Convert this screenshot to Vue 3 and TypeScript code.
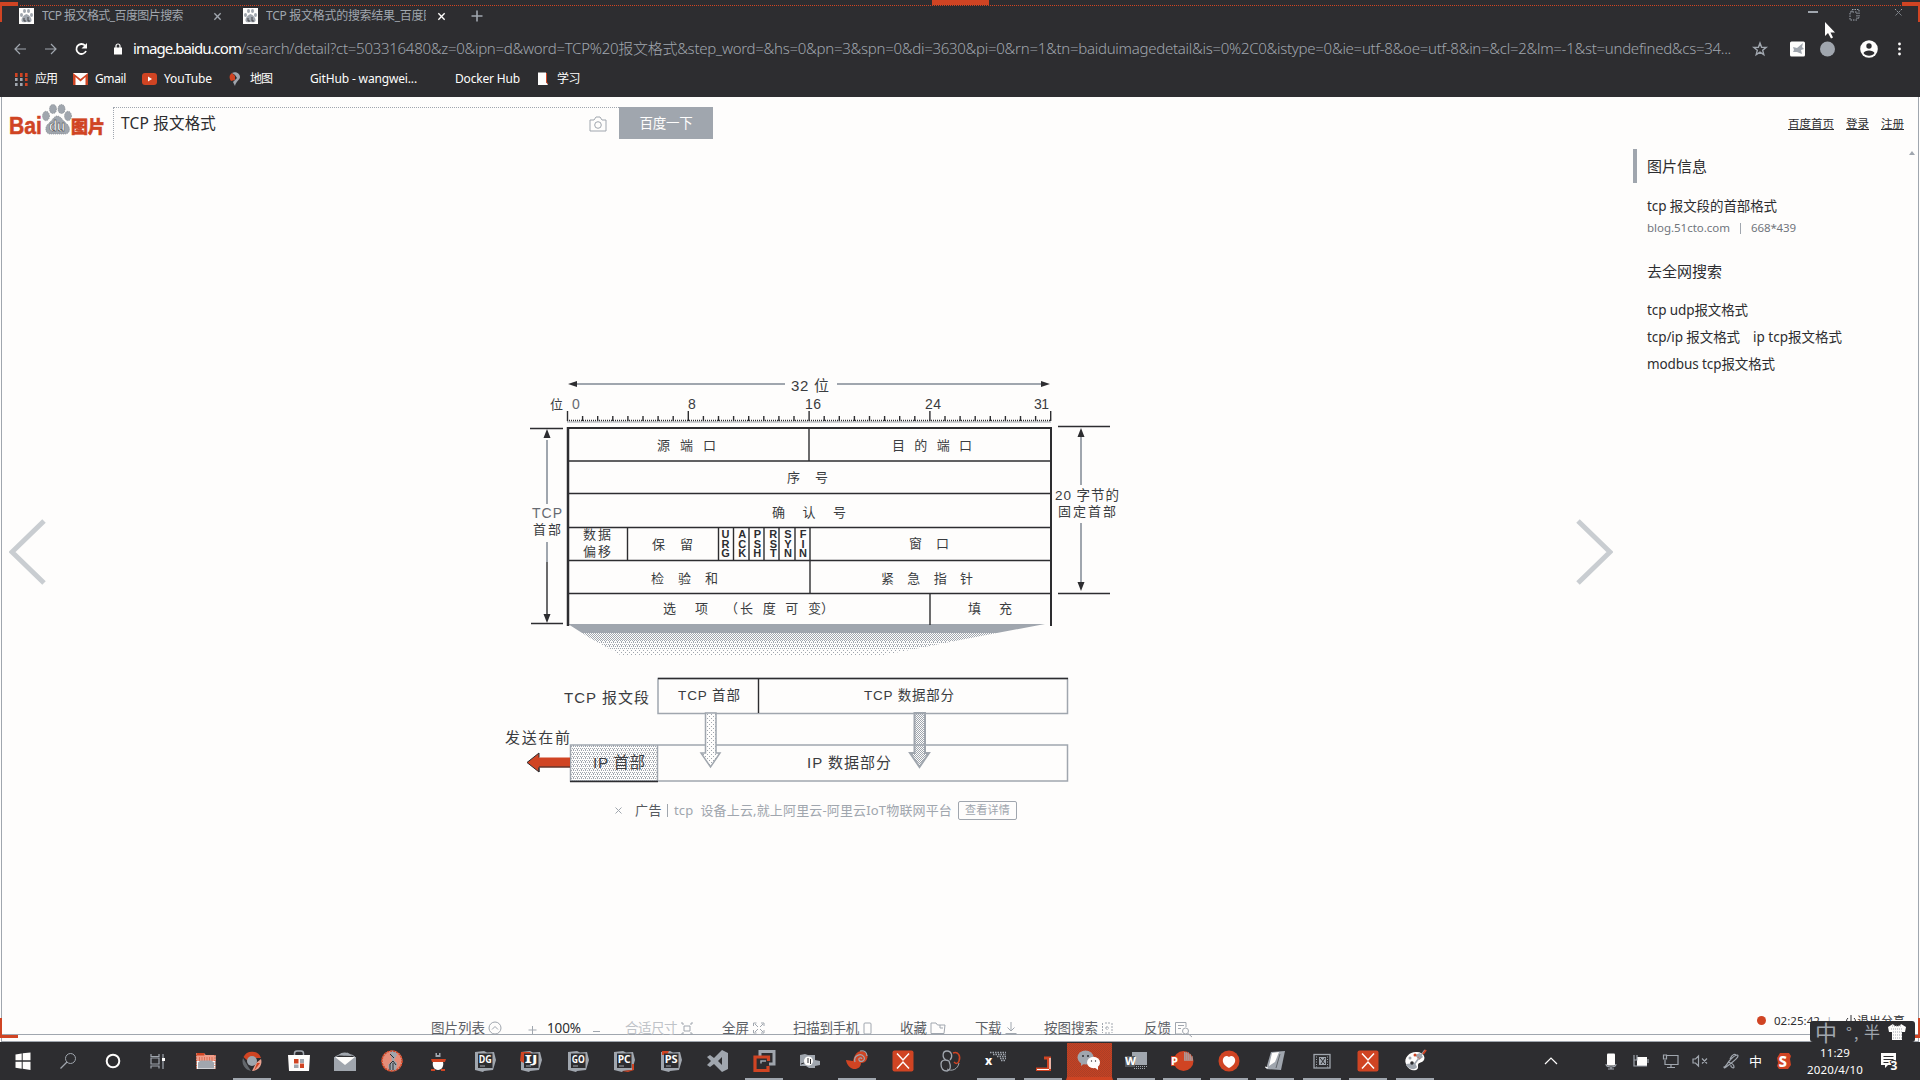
<script setup lang="ts">
interface Mark { label: string; icon: string; w: number; iconW: number; gap: number; lead: number }
interface Tool { label: string; icon: string; w: number; iconW: number; lead: number; dim?: boolean }
interface Task { icon: string; open?: boolean; active?: boolean }
interface Label { t: string; x: number; y: number; w: number; s?: number; soft?: boolean }

// Stretches or tightens the letter spacing so that a label fills its slot.
const vFit = {
  mounted(el: HTMLElement, binding: { value: number }) {
    const natural = el.getBoundingClientRect().width
    const count = Array.from(el.textContent ?? '').length
    el.style.letterSpacing = `${(binding.value - natural) / count}px`
    el.style.width = `${binding.value}px`
  },
}

const R = '#d04423'
const G = '#a0a6ae'
const W = '#fefdfc'
const D = '#2d2d30'

const rest = '/search/detail?ct=503316480&z=0&ipn=d&word=TCP%20报文格式&step_word=&hs=0&pn=3&spn=0&di=3630&pi=0&rn=1&tn=baiduimagedetail&is=0%2C0&istype=0&ie=utf-8&oe=utf-8&in=&cl=2&lm=-1&st=undefined&cs=34...'

const favicon = `<rect width="15" height="16" fill="${W}"/><g fill="${G}"><ellipse cx="2.500" cy="7" rx="1.500" ry="2"/><ellipse cx="5.500" cy="3" rx="1.500" ry="2"/><ellipse cx="9.500" cy="3" rx="1.500" ry="2"/><ellipse cx="12.500" cy="7" rx="1.500" ry="2"/><path d="M7.500 6C5 7 2 10 2.500 13c1 2 3 1 5 1s4 1 5-1c.5-3-2.500-6-5-7z"/></g><path d="M5 10v3h2M9 9v4h2" stroke="${D}" fill="none" stroke-width=".8"/>`

const apps = [2, 7, 12].map((x) => [2, 7, 12].map((y) => `<rect x="${x - 1}" y="${y}" width="2.600" height="${y === 2 ? 4 : 3}" fill="${y === 2 || x === 12 ? R : G}"/>`).join('')).join('')
const bookmarks: Mark[] = [
  { label: '应用', w: 22, iconW: 14, gap: 7, lead: 14, icon: apps },
  { label: 'Gmail', w: 31, iconW: 15, gap: 7, lead: 16, icon: `<rect y="2" width="15" height="12" fill="${W}"/><path d="M0 14V2l7.500 6L15 2v12h-2.500V6l-5 4.500-5-4.500v8z" fill="${R}"/>` },
  { label: 'YouTube', w: 48, iconW: 15, gap: 7, lead: 16, icon: `<rect y="2" width="15" height="12" rx="3" fill="${R}"/><path d="M6 5.500v5l4-2.500z" fill="${W}"/>` },
  { label: '地图', w: 22, iconW: 12, gap: 9, lead: 17, icon: `<path d="M6 9 2 10C0 7 0 4 3 2l3 3z" fill="${R}"/><path d="M3 2c3-2 8 0 8 4 0 3-4 4-5 9l-2-4 4-4-2-3z" fill="${G}"/>` },
  { label: 'GitHub - wangwei...', w: 107, iconW: 0, gap: 0, lead: 38, icon: '' },
  { label: 'Docker Hub', w: 65, iconW: 0, gap: 0, lead: 38, icon: '' },
  { label: '学习', w: 23, iconW: 12, gap: 8, lead: 17, icon: `<path d="M1 1.500h8V11l2 3H1z" fill="${W}"/><path d="M9.500 2v9l1.500 2" stroke="${R}" fill="none"/>` },
]

const sm = `fill="none" stroke="${G}"`
const tools: Tool[] = [
  { label: '图片列表', w: 54, iconW: 14, lead: 0, icon: `<circle cx="7" cy="7" r="6" ${sm}/><path d="M4 8.500 7 5.500l3 3" ${sm}/>` },
  { label: '合适尺寸', w: 52, iconW: 14, lead: 24, dim: true, icon: `<path d="M4 5h6v5H4zM1 2h2v2M13 2h-2v2M1 13h2v-2M13 13h-2v-2" ${sm}/>` },
  { label: '全屏', w: 27, iconW: 14, lead: 28, icon: `<path d="M1.500 5V2h3M12 5V2H9M1.500 9v3h3M12 9v3H9M3 3l3 3M11 3 8 6M3 11l3-3M11 11 8 8" ${sm}/>` },
  { label: '扫描到手机', w: 66, iconW: 14, lead: 27, icon: `<rect x="2" y="2" width="7" height="11" rx="1" ${sm}/>` },
  { label: '收藏', w: 27, iconW: 16, lead: 24, icon: `<path d="M1 12.500V2h5l1.500 2H15l-1 8.500zM10 4v3h3" ${sm}/>` },
  { label: '下载', w: 26, iconW: 14, lead: 29, icon: `<path d="M7 1v8M3.500 6.500 7 10l3.500-3.500M1.500 12.500h11" ${sm}/>` },
  { label: '按图搜索', w: 54, iconW: 14, lead: 26, icon: `<path d="M1.500 2v10M11 2v10M4 2h5M4 12h5M6 5v4M4 7h4" ${sm} stroke-dasharray="2 1"/>` },
  { label: '反馈', w: 27, iconW: 19, lead: 29, icon: `<path d="M12 6V1.500H1.500V13H8M4 4.500h6M4 7.500h3" ${sm}/><circle cx="11.500" cy="10" r="3" ${sm}/><path d="m14 12.500 4 3.500" ${sm}/>` },
]

const ide = (t: string, accent: string) =>
  `<path d="M2 3l9-1 3 1.500 7-.5 2 8-3 10-9 1-1 1-8-2V13z" fill="${G}"/>${accent}<rect x="5" y="4.500" width="14.500" height="14.500" fill="${D}"/><text x="12.200" y="14" text-anchor="middle" font-size="10.500" font-weight="700" fill="${W}" font-family="Noto Sans, sans-serif" textLength="13" lengthAdjust="spacingAndGlyphs">${t}</text><path d="M7 17h5" stroke="${G}"/>`
const redX = `<rect x="1.500" y="1.500" width="21" height="21" rx="2" fill="${R}"/><path d="M6 4.500 12 11l6-6.500M6 19.500 12 13l6 6.500" fill="none" stroke="${W}" stroke-width="1.500"/>`
const office = (t: string, base: string) => `${base}<text x="1" y="16" font-size="11" font-weight="800" fill="${W}" font-family="Noto Sans, sans-serif">${t}</text>`

const systemIcons: string[] = [
  `<path d="M4.500 5.500 10.700 4.500v6.700H4.500zM11.700 4.300 19.500 3.500v7.700h-7.800zM4.500 12.700h6.200v7L4.500 18.700zM11.700 12.700h7.800V21l-7.800-1.200z" fill="${W}"/>`,
  `<circle cx="14.500" cy="9.500" r="5" ${sm}/><path d="M11 13l-6.500 6.500" ${sm} stroke-width="1.300"/>`,
  `<circle cx="12" cy="12" r="6.300" fill="none" stroke="${W}" stroke-width="2"/>`,
  `<path d="M5 5v2.500h8V5M5 19.500V17h8v2.500M5 9h8v6H5zM17 5v15" ${sm} stroke-width="1.200"/><rect x="16" y="9" width="3" height="3" fill="${W}"/>`,
]
const tasks: Task[] = [
  { icon: `<path d="M2.500 4h7l2 2h10v14h-19z" fill="${W}"/><path d="M2.500 4h7l2 2h10v6H2.500z" fill="#ee9d8a"/><path d="M2.500 4h8v2.500h-8z" fill="${R}"/><path d="M2.500 6v14M21 6v14M5 9h15M5 11h15" stroke="${R}" stroke-dasharray="1 1.500"/><path d="M4 19.500v-6l2.500-2h11l2.500 2v6z" fill="${G}"/>` },
  { open: true, icon: `<path d="M3.500 8A9.500 9.500 0 0 1 21 9h-9l-4 3z" fill="${R}"/><path d="M3 9l6 10 2 3A10 10 0 0 1 3 9z" fill="#63676c"/><path d="M21 10c2 6-3 12-9 12l4-8z" fill="#e7a190"/><path d="M20 14l-6 8 3-8z" fill="${R}"/><circle cx="12" cy="12" r="5" fill="${G}"/>` },
  { icon: `<path d="M7.500 7V4.500A2.500 2.500 0 0 1 10 2h4a2.500 2.500 0 0 1 2.500 2.500V7" fill="none" stroke="${G}" stroke-width="1.500"/><path d="M1 6h22l-1 16H2z" fill="${W}"/><path d="M7 10h4.500v4.500H7zM13 14.500h4V19h-4z" fill="${R}"/><path d="M7 15.500h4.500V19H7zM13 10h4v4h-4z" fill="${G}"/>` },
  { icon: `<path d="M6 6c1-3 10-4 13 1" fill="${G}"/><path d="M1 8h22v14H1z" fill="${G}"/><path d="M2 8h20l-10 8z" fill="${W}"/><path d="M8 4.500l3 1.500 4-2M2 8l4-2h13l3 2" fill="none" stroke="${G}"/>` },
  { icon: `<circle cx="12" cy="12" r="10.500" fill="#e58d79"/><path d="M10 2c4-1 7 1 7 4l-3 5 3 3-1 8-7-1-1-5 4-4z" fill="${G}"/><path d="M10 21v-6l3-3 3 4M13 14v7M10 5l4 4" fill="none" stroke="${D}"/><circle cx="12" cy="12" r="10" fill="none" stroke="${R}" stroke-width="1.500" stroke-dasharray="2 1"/>` },
  { icon: `<path d="M9.500 4h1.500v2h2V4h1.500v4h-5z" fill="${G}"/><path d="M5 10h15l-1 3H6zM5 20h4v2H5zM15 20h4v2h-4z" fill="${R}"/><path d="M7 13h10c1 4-1 8-5 8s-6-4-5-8z" fill="${W}"/>` },
  { icon: ide('DG', '') },
  { icon: ide('IJ', `<path d="M2 3h9l3 4-9 7-4-2z" fill="${R}"/>`) },
  { icon: ide('GO', '') },
  { icon: ide('PC', `<path d="M10 22l10-1v-6h2v6l-6 2z" fill="${R}"/>`) },
  { icon: ide('PS', `<path d="M3 2h7l-2 4H3z" fill="${R}"/>`) },
  { icon: `<path d="M17 1l6 3v16l-6 3-8-8-4 3-3-2 4-4-4-4 3-2 4 3zM17 8l-4 4 4 4z" fill="${G}" fill-rule="evenodd"/>` },
  { open: true, icon: `<path d="M8 7V2.500h14V15h-5" fill="none" stroke="${G}" stroke-width="3"/><path d="M16.500 12V8H3v13.500h13V17" fill="none" stroke="${R}" stroke-width="3.200"/><path d="M9 14.500V12h5" fill="none" stroke="${G}" stroke-width="1.500"/>` },
  { icon: `<path d="M2 6l5-1 3 1h7v5l5 1v4l-5 1v2h-6l-3-2H2z" fill="${G}"/><circle cx="10.500" cy="12" r="4.500" fill="${W}"/><path d="M10 9v5M12.500 10v5M3 15l3-1" stroke="${D}"/>` },
  { open: true, icon: `<path d="M1 11l7 1c1-3 2-9 8-10 5 0 8 4 6 8-1 3-4 4-6 4 0 8-13 9-15-3z" fill="${R}"/><path d="M10 13c-2-6 6-10 9-5 2 4-4 6-5 3-1-2 2-3 3-1M15 2c4-1 7 1 7 5" fill="none" stroke="${G}" stroke-width="1.200"/>` },
  { icon: redX },
  { icon: `<path d="M8 11C4 9 4 2 9 2s6 6 3 9M3 15c0-4 4-5 8-3 2 5 2 9-2 10-4 0-6-3-6-7z" fill="none" stroke="${G}" stroke-width="1.300"/><path d="M15 4c5-2 8 3 6 8-1 3-3 3-5 1" fill="none" stroke="${R}" stroke-width="1.500"/><path d="M9 20c5 3 11 0 12-6" fill="none" stroke="${G}"/>` },
  { open: true, icon: `<path d="M6 3.500h16M9 5.500h13M13 7.500h9M16 9.500h6M17 11.500h5" stroke="${G}" stroke-width="1.300" stroke-dasharray="1.500 1"/><text x="1" y="16" font-size="12" font-weight="800" fill="${W}" font-family="Noto Sans, sans-serif">x</text>` },
  { open: true, icon: `<path d="M13 7.500h7V22H5v-3.500h11V10.500h-3z" fill="${R}"/><path d="M6 20.500h12M19 9v11" stroke="${W}" stroke-width="1.200"/>` },
  { active: true, icon: `<ellipse cx="8.500" cy="9.500" rx="8" ry="7" fill="${G}"/><path d="M4 14v4l4-3z" fill="${G}"/><ellipse cx="16.500" cy="14.500" rx="6.500" ry="5.700" fill="${W}"/><path d="M17 19l4 3v-4z" fill="${W}"/><circle cx="6" cy="8" r="1" fill="${D}"/><circle cx="11" cy="8" r="1" fill="${D}"/><circle cx="14.500" cy="13" r=".7" fill="${D}"/><circle cx="18.500" cy="13" r=".7" fill="${D}"/>` },
  { open: true, icon: office('W', `<rect x="8" y="3" width="15" height="13" fill="${G}"/><path d="M12 17.500h11M10 19.500h12" stroke="${G}" stroke-dasharray="1 1"/><rect x="1" y="7" width="10" height="11" fill="#55595e"/>`) },
  { open: true, icon: office('P', `<circle cx="13.500" cy="12" r="10" fill="${R}"/><path d="M14 3a9 9 0 0 1 9 9h-9z" fill="#b98378"/><path d="M14 4h6M14 6h8M14 8h9M14 10h9" stroke="${G}" stroke-dasharray="1 1"/><rect x="1" y="7" width="9" height="10" fill="${R}"/>`) },
  { open: true, icon: `<circle cx="12" cy="12" r="10.500" fill="${R}"/><path d="M12 19c-4-2-7-5-6-9 1-3 4-4 6-2 2-2 5-1 6 2 1 4-2 7-6 9z" fill="${W}"/>` },
  { open: true, icon: `<path d="M8 3l14-1-4 19-15-1z" fill="${G}"/><path d="M9 4l7-1-4 10-6 4z" fill="${W}"/><path d="M17 5l-4 14" stroke="#63676c"/><path d="M2 18l3 1" stroke="${W}"/>` },
  { open: true, icon: `<rect x="4" y="5.500" width="16" height="13.500" ${sm} stroke-width="1.300"/><path d="M6.500 5v14M17.500 5v14" ${sm} stroke-dasharray="1 1.500"/><rect x="9" y="8" width="7" height="8" fill="${G}"/><path d="M10 9l5 6M15 9l-4 6" stroke="${D}"/>` },
  { open: true, icon: redX },
  { open: true, icon: `<path d="M3 15C0 8 8 2 14 3c7 0 10 7 5 10-3 1-4 1-4 4 1 7-10 5-12-2z" fill="${W}"/><path d="M12 6l5-2 3 4-4 3M3 15c1 5 9 7 11 3l-2-4z" fill="${G}"/><circle cx="7" cy="9" r="1.500" fill="${G}"/><circle cx="12" cy="6" r="1.500" fill="${R}"/><circle cx="16" cy="9" r="1.300" fill="${R}"/><circle cx="9" cy="14" r="1.800" fill="${D}"/><path d="M22 1L10 17" stroke="${G}" stroke-width="1.500"/><path d="M23 1l-3 4" stroke="${R}" stroke-width="2"/>` },
]

const st = `fill="none" stroke="${G}" stroke-width="1.200"`
const trayIcons = [
  { lead: 0, icon: `<path d="M6 15l6-6 6 6" fill="none" stroke="${W}" stroke-width="1.200"/>` },
  { lead: 36, icon: `<rect x="8" y="4.500" width="8" height="12" rx="1" fill="${W}"/><path d="M7 15c0 4 10 4 10 0M12 18v2M9 20h6" ${st}/>` },
  { lead: 6, icon: `<rect x="8" y="8" width="10" height="9" fill="${W}"/><path d="M5 6v5h3V6M5 11v6h13M19 10v4" ${st}/>` },
  { lead: 6, icon: `<path d="M8 6.500h11v9H6V11M4.500 6h3v4h-3zM12 16v2.500M8 18.500h8" ${st}/>` },
  { lead: 5, icon: `<path d="M5 10v4h2.500l3 3V7l-3 3zM14 9.500l5 5M19 9.500l-5 5" ${st}/>` },
  { lead: 7, icon: `<path d="M5 18c2 0 3-4 7-8s7-5 7-3-4 5-8 8-6 5-6 3zM11 10c2-5 6-6 6-3M9 13c4 1 6 2 6 5 0 2-4 0-3-2" ${st}/>` },
]

const sideLinks = [
  [{ t: 'tcp udp报文格式', w: 101 }],
  [{ t: 'tcp/ip 报文格式', w: 93 }, { t: 'ip tcp报文格式', w: 89 }],
  [{ t: 'modbus tcp报文格式', w: 128 }],
]

// Figure geometry: ruler ticks, row separators and cell dividers.
const ticks = Array.from({ length: 33 }, (_, i) => ({ x: 567.5 + i * 15.1, tall: i % 8 === 0 }))
const rowLines = [461, 493.5, 527.5, 560.5, 593.5]
const cuts: [number, number, number][] = [
  [809, 428, 461], [627.5, 528, 560], [718.5, 528, 560], [733.5, 528, 560], [749, 528, 560],
  [764, 528, 560], [779, 528, 560], [795, 528, 560], [810, 528, 593], [930, 593, 625],
]
const flags = [
  { x: 725.5, t: 'URG' }, { x: 742.3, t: 'ACK' }, { x: 757.3, t: 'PSH' },
  { x: 773.3, t: 'RST' }, { x: 788, t: 'SYN' }, { x: 803, t: 'FIN' },
]
const labels: Label[] = [
  { t: '32 位', x: 791, y: 385.5, w: 38, s: 15 },
  { t: '位', x: 550, y: 404, w: 13, s: 13 }, { t: '0', x: 572, y: 404, w: 8, s: 14, soft: true },
  { t: '8', x: 688, y: 404, w: 8, s: 14 }, { t: '16', x: 805, y: 404, w: 16, s: 14 },
  { t: '24', x: 925, y: 404, w: 16, s: 14 }, { t: '31', x: 1034, y: 404, w: 15, s: 14 },
  { t: '源端口', x: 657, y: 445, w: 59 }, { t: '目的端口', x: 892, y: 445, w: 80 },
  { t: '序号', x: 787, y: 477.5, w: 41 }, { t: '确认号', x: 772, y: 512, w: 74 },
  { t: '数据', x: 583, y: 534, w: 28 }, { t: '偏移', x: 583, y: 551, w: 28 },
  { t: '保留', x: 652, y: 544, w: 41 }, { t: '窗口', x: 909, y: 543.5, w: 40 },
  { t: '检验和', x: 651, y: 578, w: 67 }, { t: '紧急指针', x: 881, y: 578, w: 92 },
  { t: '选项', x: 663, y: 608, w: 45 }, { t: '（', x: 725, y: 608, w: 13 },
  { t: '长度可变', x: 740, y: 608, w: 81 }, { t: '）', x: 821, y: 608, w: 13 },
  { t: '填充', x: 968, y: 608, w: 44 },
  { t: 'TCP', x: 532, y: 513, w: 30, s: 14, soft: true }, { t: '首部', x: 533, y: 529.5, w: 28 },
  { t: '20 字节的', x: 1055, y: 495.5, w: 64, s: 13.5 }, { t: '固定首部', x: 1058, y: 511, w: 58 },
  { t: 'TCP 报文段', x: 564, y: 697, w: 85, s: 15 }, { t: 'TCP 首部', x: 678, y: 695, w: 62, s: 13.5 },
  { t: 'TCP 数据部分', x: 864, y: 695, w: 90, s: 13.5 }, { t: '发送在前', x: 505, y: 737, w: 65, s: 15 },
  { t: 'IP 首部', x: 593, y: 762, w: 52, s: 15.5 }, { t: 'IP 数据部分', x: 807, y: 762, w: 84, s: 15 },
]
</script>

<template>
  <div class="screen">
    <header class="chrome">
      <div class="tabs">
        <svg class="fav" viewBox="0 0 15 16" v-html="favicon" />
        <span class="tab-title t1"><span v-fit="141" class="fit">TCP 报文格式_百度图片搜索</span></span>
        <svg class="x x1" viewBox="0 0 10 10"><path d="M1.500 1.500l7 7M8.500 1.500l-7 7" /></svg>
        <svg class="fav f2" viewBox="0 0 15 16" v-html="favicon" />
        <span class="tab-title t2"><span v-fit="169" class="fit">TCP 报文格式的搜索结果_百度图</span></span>
        <svg class="x x2" viewBox="0 0 10 10"><path d="M1.500 1.500l7 7M8.500 1.500l-7 7" /></svg>
        <svg class="plus" viewBox="0 0 12 12"><path d="M6 .5v11M.5 6h11" /></svg>
        <svg class="winbtns" viewBox="0 0 100 16"><path d="M3 5h10" stroke-width="2" /><path d="M45 5h7v8h-7zM47 5V2.500h7V11h-2" stroke-dasharray="1.500 1" /><path d="M90 2l7 7M97 2l-7 7" stroke-dasharray="1.500 1" /></svg>
      </div>
      <div class="nav">
        <svg class="nav-ic" viewBox="0 0 80 16"><g fill="none" stroke="#a0a6ae" stroke-width="1.200"><path d="M12 8H1M6 3L1 8l5 5M31 8h11M37 3l5 5-5 5" /></g><path d="M71 4.500A5 5 0 1 0 72 10" fill="none" stroke="#fefdfc" stroke-width="1.800" /><path d="M73 2v5.500h-5.500z" fill="#fefdfc" /></svg>
        <svg class="lock" viewBox="0 0 8 12"><rect y="4.500" width="8" height="7" fill="#fefdfc" /><path d="M2 5V3a2 2 0 0 1 4 0v2" fill="none" stroke="#fefdfc" stroke-width="1.200" /></svg>
        <span v-fit="108" class="fit host">image.baidu.com</span>
        <span v-fit="1490" class="fit query">{{ rest }}</span>
        <svg class="nav-right" viewBox="0 0 160 20">
          <path d="M10 4l1.600 4.200 4.600.2-3.500 2.900 1.100 4.400-3.800-2.500-3.800 2.500 1.100-4.400-3.500-2.900 4.600-.2z" fill="none" stroke="#a0a6ae" stroke-width="1.400" />
          <rect x="40" y="2.500" width="15" height="15" rx="1.500" fill="#fefdfc" /><path d="M43 8l4 1 6-5-1 4 2 2-3 1 1 4-5-2-4 0 1-2z" fill="#a0a6ae" />
          <circle cx="77.500" cy="10" r="7.500" fill="#a0a6ae" /><circle cx="119" cy="10" r="8.800" fill="#fefdfc" /><circle cx="119" cy="7" r="2.700" fill="#2d2d30" /><path d="M113.500 14c1-3.500 10-3.500 11 0-2 3.500-9 3.500-11 0z" fill="#2d2d30" />
          <g fill="#fefdfc"><circle cx="149.500" cy="5" r="1.400" /><circle cx="149.500" cy="10" r="1.400" /><circle cx="149.500" cy="15" r="1.400" /></g>
        </svg>
      </div>
      <div class="marks">
        <div v-for="b in bookmarks" :key="b.label" class="mark" :style="{ marginLeft: b.lead + 'px' }">
          <svg v-if="b.iconW" :width="b.iconW" height="16" :style="{ marginRight: b.gap + 'px' }" v-html="b.icon" />
          <span v-fit="b.w" class="fit">{{ b.label }}</span>
        </div>
      </div>
      <i class="dots" /><i class="knob" />
      <svg class="cursor" viewBox="0 0 10 17"><path d="M0 0v14l3-3 3 5.500 2-1-2.500-5H10z" fill="#fefdfc" /></svg>
    </header>

    <main class="page">
      <div class="search">
        <svg class="logo" viewBox="0 0 97 32">
          <g fill="#a0a6ae" stroke="#85898f" stroke-width=".8" stroke-dasharray="1 1"><ellipse cx="37" cy="12" rx="3.500" ry="4.700" /><ellipse cx="44" cy="5" rx="3.500" ry="4.500" /><ellipse cx="52.500" cy="5" rx="3.500" ry="4.500" /><ellipse cx="59" cy="12" rx="3.500" ry="4.700" /><path d="M48 12c-3 0-5 5-9 8-4 4-2 10 2 10h15c5 0 6-6 2-10-4-3-6-8-10-8z" /></g>
          <text x="0" y="30" class="red" font-size="23" textLength="33" lengthAdjust="spacingAndGlyphs">Bai</text>
          <text x="40" y="27" fill="#fefdfc" stroke="#2d2d30" stroke-width=".5" font-size="15" font-weight="700" textLength="16" lengthAdjust="spacingAndGlyphs">du</text>
          <text x="62" y="29" class="red cj" font-size="17.500" textLength="34" lengthAdjust="spacingAndGlyphs">图片</text>
        </svg>
        <div class="box">
          <span v-fit="95" class="fit">TCP 报文格式</span>
          <svg class="cam" viewBox="0 0 18 16"><path d="M1 4h4l2-3h4l2 3h4v11H1z" fill="none" stroke="#a0a6ae" /><circle cx="9" cy="9" r="3.300" fill="none" stroke="#a0a6ae" /></svg>
        </div>
        <button><span v-fit="53" class="fit">百度一下</span></button>
        <nav class="user">
          <a><span v-fit="46" class="fit">百度首页</span></a><a><span v-fit="23" class="fit">登录</span></a><a><span v-fit="23" class="fit">注册</span></a>
        </nav>
      </div>

      <div class="body">
        <div class="stage">
          <svg class="arrow prev" viewBox="0 0 38 68"><path d="M35 3L3 34l32 31" /></svg>
          <div class="figure">
            <svg class="drawing" viewBox="500 370 640 420">
              <defs>
                <pattern id="mesh" width="2" height="2" patternUnits="userSpaceOnUse"><rect width="1" height="1" fill="#a0a6ae" /><rect x="1" y="1" width="1" height="1" fill="#a0a6ae" /></pattern>
                <pattern id="light" width="4" height="4" patternUnits="userSpaceOnUse"><rect width="1" height="1" fill="#a0a6ae" /><rect x="2" width="1" height="1" fill="#a0a6ae" /><rect x="1" y="2" width="1" height="1" fill="#a0a6ae" /><rect x="3" y="2" width="1" height="1" fill="#a0a6ae" /><rect x="1" y="1" width="1" height="1" fill="#a0a6ae" /></pattern>
                <pattern id="sparse" width="4" height="4" patternUnits="userSpaceOnUse"><rect x="1" width="1" height="1" fill="#a0a6ae" /><rect x="3" y="2" width="1" height="1" fill="#a0a6ae" /></pattern>
                <clipPath id="cone"><path d="M568 624H1045L960 640 905 651 878 656H622L590 638z" /></clipPath>
              </defs>
              <g clip-path="url(#cone)"><rect x="560" y="624" width="500" height="9" fill="#a0a6ae" /><rect x="560" y="633" width="500" height="8" fill="url(#mesh)" /><rect x="560" y="641" width="500" height="8" fill="url(#light)" /><rect x="560" y="649" width="500" height="7" fill="url(#sparse)" /></g>
              <g class="soft"><path d="M575 384H785M837 384H1043" /><path d="M567 422H1051" stroke-width="1" /><path d="M547 440V504M547 542V562M1081 435V485M1081 523V583" /></g>
              <g fill="#2d2d30"><path d="M568 384l9-3v6zM1050 384l-9-3v6zM547 429l3.500 9h-7zM547 623l3.500-9h-7zM1081 428l3.500 9h-7zM1081 591l3.500-9h-7z" /></g>
              <g class="ink">
                <path d="M567 420.500H1051" stroke-dasharray="1 1" />
                <path v-for="k in ticks" :key="k.x" :d="`M${k.x} ${k.tall ? 411 : 416}V421`" />
                <path d="M530 428.500H563M531 623.500H563M547 562V615M1058 426.500H1110M1058 593.500H1110" />
                <path v-for="y in rowLines" :key="y" :d="`M568 ${y}H1051`" />
                <path v-for="(c, i) in cuts" :key="i" :d="`M${c[0]} ${c[1]}V${c[2]}`" />
                <path d="M567 428H1052" stroke-width="2" /><path d="M568 427V626" stroke-width="2.500" /><path d="M1051 427V626" stroke-width="2" />
              </g>
              <rect x="570" y="745" width="88" height="36" fill="url(#light)" />
              <g class="soft thin"><rect x="658" y="678.500" width="409.500" height="35" fill="none" /><rect x="570.500" y="745" width="497" height="36" fill="none" /><path d="M657.500 745V781" /></g>
              <path d="M658 678.500H1068M758.500 678V713M570 781.500H658" class="ink" />
              <path d="M705.500 713V753h-4.500l9.500 14 9.500-14h-4V713z" fill="#fefdfc" /><path d="M705.500 713V753h-4.500l9.500 14 9.500-14h-4V713z" fill="url(#sparse)" class="soft thin" />
              <path d="M914.500 713V753h-4.500l9.500 14 9.500-14h-4V713z" fill="url(#mesh)" class="soft" />
              <path d="M527 762.500l12-9.500v4.500h31v10h-31v4.500z" fill="#d04423" /><path d="M527 762.500l12-9.500v4.500M539 767.500v4.500zM539 767h31M527 762.500l12 9.500" fill="none" stroke="#2d2d30" />
              <text v-for="(l, i) in labels" :key="i" :x="l.x" :y="l.y + (l.s ?? 13) * 0.37" :font-size="l.s ?? 13" :textLength="l.w" :class="{ pale: l.soft }">{{ l.t }}</text>
              <g v-for="f in flags" :key="f.t" class="flag"><text v-for="(ch, i) in f.t.split('')" :key="i" :x="f.x" :y="538 + i * 9.700">{{ ch }}</text></g>
            </svg>
            <div class="ad">
              <svg class="adx" viewBox="0 0 7 7"><path d="M.5.5l6 6M6.500.5l-6 6" /></svg>
              <span v-fit="27" class="fit dark">广告</span><i />
              <span v-fit="278" class="fit">tcp&nbsp; 设备上云,就上阿里云-阿里云IoT物联网平台</span>
              <a><span v-fit="45" class="fit">查看详情</span></a>
            </div>
          </div>
          <svg class="arrow" viewBox="0 0 38 68"><path d="M3 3l32 31L3 65" /></svg>
        </div>
        <aside class="side">
          <h2 class="first"><span v-fit="60" class="fit">图片信息</span></h2>
          <p class="name"><span v-fit="130" class="fit">tcp 报文段的首部格式</span></p>
          <p class="src"><span v-fit="83" class="fit">blog.51cto.com</span><i /><span v-fit="45" class="fit">668*439</span></p>
          <h2 class="second"><span v-fit="75" class="fit">去全网搜索</span></h2>
          <p v-for="(row, i) in sideLinks" :key="i" class="links"><a v-for="l in row" :key="l.t"><span v-fit="l.w" class="fit">{{ l.t }}</span></a></p>
          <b class="tri" />
        </aside>
      </div>

      <div class="tools">
        <template v-for="(t, i) in tools" :key="t.label">
          <div class="tool" :class="{ dim: t.dim }" :style="{ marginLeft: t.lead + 'px' }"><span v-fit="t.w" class="fit">{{ t.label }}</span><svg :width="t.iconW" height="17" v-html="t.icon" /></div>
          <div v-if="i === 0" class="zoomer"><svg width="9" height="10"><path d="M4.500 1v8M.5 5h8" /></svg><span v-fit="34" class="fit">100%</span><svg width="9" height="10"><path d="M1 6.500h7" /></svg></div>
        </template>
        <div class="share"><i /><span v-fit="46" class="fit">02:25:42</span><em>|</em><svg width="12" height="14"><path d="M3 4a4.500 4.500 0 1 0 6 0M6 1v6" fill="none" stroke="#2d2d30" /></svg><span v-fit="48" class="fit">退出分享</span></div>
      </div>
      <div class="ime"><span class="zh">中</span><span class="punct">°,</span><span class="half">半</span><svg viewBox="0 0 20 18"><path d="M1 4l5-3c1 3 7 3 8 0l5 3-1 5h-3v8H5V9H2z" fill="#fefdfc" /><path d="M5 3h10M4 6h12M6 9h9M6 12h9M6 15h9" stroke="#a0a6ae" stroke-dasharray="1 1" /></svg></div>
    </main>

    <footer class="taskbar">
      <div class="system"><svg v-for="(s, i) in systemIcons" :key="i" width="24" height="24" v-html="s" /></div>
      <div class="apps"><div v-for="(t, i) in tasks" :key="i" class="task" :class="{ open: t.open, active: t.active }"><svg width="24" height="24" v-html="t.icon" /></div></div>
      <div class="tray">
        <svg v-for="(t, i) in trayIcons" :key="i" width="24" height="24" :style="{ marginLeft: t.lead + 'px' }" v-html="t.icon" />
        <span class="zhong">中</span>
        <svg class="sogou" width="16" height="20" viewBox="0 0 16 20"><path d="M4 2h9l2 3-1 3 1 6-3 4H3l-2-3 1-3-1-5z" fill="#d04423" /><text x="2.500" y="15.500" font-size="15" font-weight="800" fill="#fefdfc">S</text></svg>
        <div class="clock"><span v-fit="30" class="fit">11:29</span><span v-fit="56" class="fit">2020/4/10</span></div>
        <svg width="20" height="20" viewBox="0 0 20 20"><path d="M1 2h15v12H8l-3 3v-3H1z" fill="#fefdfc" /><path d="M3.500 5.500h10M3.500 8.500h10M3.500 11.500h5" stroke="#2d2d30" /><text x="10.500" y="18.500" font-size="12" font-weight="700" fill="#fefdfc" stroke="#2d2d30" stroke-width="2" paint-order="stroke">3</text></svg>
      </div>
    </footer>
    <i class="corner tl" /><i class="corner tr" /><i class="corner bl" /><i class="corner br" />
  </div>
</template>

<style>
body { background: #fefdfc; overflow: hidden; }
</style>

<style scoped>
* { box-sizing: border-box; margin: 0; }
.screen { position: relative; width: 1920px; height: 1080px; display: flex; flex-direction: column; overflow: hidden; background: #fefdfc; color: #2d2d30; font: 13px/1 "Noto Sans", "Noto Sans CJK SC", sans-serif; }
svg { display: block; flex: none; }
i { font-style: normal; }
.fit { display: inline-block; white-space: pre; flex: none; }

.chrome { position: relative; flex: none; height: 97px; background: #2d2d30; color: #fefdfc; }
.tabs { height: 32px; display: flex; align-items: center; padding-left: 19px; }
.fav { width: 15px; height: 16px; }
.tab-title { margin-left: 8px; font-size: 12px; line-height: 20px; color: #a0a6ae; overflow: hidden; flex: none; }
.t1 { width: 142px; }
.t2 { width: 160px; }
.x { width: 9px; height: 9px; fill: none; stroke: #a0a6ae; stroke-width: 1.5; }
.x1 { margin-left: 29px; }
.x2 { margin-left: 11px; stroke: #fefdfc; }
.f2 { margin-left: 21px; }
.plus { width: 12px; height: 12px; margin-left: 25px; fill: none; stroke: #a0a6ae; stroke-width: 1.6; }
.winbtns { width: 100px; height: 16px; margin-left: auto; margin-right: 15px; margin-top: -3px; fill: none; stroke: #a0a6ae; }
.nav { height: 33px; display: flex; align-items: center; padding-left: 14px; font-size: 15px; }
.nav-ic { width: 80px; height: 16px; }
.lock { width: 8px; height: 12px; margin: 0 16px 0 20px; }
.nav .fit { line-height: 24px; margin-top: -2px; }
.nav .host { margin-left: -5px; }
.nav .query { color: #a0a6ae; font-weight: 300; }
.nav-right { width: 160px; height: 20px; margin-left: 19px; }
.marks { height: 28px; display: flex; align-items: center; font-size: 12px; }
.mark { display: flex; align-items: center; line-height: 18px; }
.dots { position: absolute; left: 20px; right: 18px; top: 5px; height: 1px; background: repeating-linear-gradient(90deg, #d04423 0 1px, transparent 1px 2px); }
.knob { position: absolute; left: 932px; top: 0; width: 57px; height: 5px; background: #d04423; }
.cursor { position: absolute; left: 1825px; top: 22px; width: 10px; height: 17px; }

.page { position: relative; height: 945px; flex: none; display: flex; flex-direction: column; border-left: 1px solid #a0a6ae; border-right: 1px solid #a0a6ae; border-bottom: 1px solid #a0a6ae; margin: 0 1px; }
.search { height: 49px; display: flex; align-items: flex-start; padding: 7px 14px 0 7px; flex: none; }
.logo { width: 97px; height: 32px; margin-right: 7px; overflow: visible; font-family: "Liberation Sans", sans-serif; }
.red { fill: #d04423; font-weight: 700; stroke: #d04423; stroke-width: .5px; }
.cj { font-family: "Noto Sans CJK SC", sans-serif; font-weight: 800; }
.box { width: 506px; height: 32px; margin-top: 3px; border-top: 1px dotted #a0a6ae; border-left: 1px dotted #a0a6ae; display: flex; align-items: center; justify-content: space-between; padding: 0 12px 0 7px; font-size: 15.5px; line-height: 24px; }
.box .fit { margin-top: -2px; }
.cam { width: 18px; height: 16px; }
button { width: 94px; height: 32px; margin-top: 3px; padding: 0 0 2px; border: 0; background: #a0a6ae; color: #fefdfc; font: 13.5px/20px "Noto Sans CJK SC", sans-serif; }
.user { margin-left: auto; margin-top: 11px; display: flex; gap: 12px; font-size: 11.5px; line-height: 18px; }
.user .fit { text-decoration: underline; }
.body { flex: 1; display: flex; min-height: 0; }
.stage { width: 1631px; display: flex; padding-left: 7px; }
.arrow { width: 38px; height: 68px; margin-top: 372px; fill: none; stroke: #c9cdd1; stroke-width: 5; }
.prev { margin-right: 453px; }
.figure { width: 640px; margin-top: 224px; margin-right: 435px; }
.drawing { width: 640px; height: 420px; font-family: "Liberation Sans", "Noto Sans CJK SC", sans-serif; }
.drawing text { fill: #3a3c40; }
.drawing .pale { fill: #666a71; }
.drawing .soft { stroke: #a0a6ae; stroke-width: 2; }
.drawing .thin, .thin > * { stroke-width: 1.5; }
.drawing .ink { stroke: #2d2d30; stroke-width: 1.4; fill: none; }
.drawing .flag text { font-size: 11px; font-weight: 700; text-anchor: middle; fill: #2d2d30; }
.ad { display: flex; align-items: center; height: 20px; margin-top: 10px; padding-left: 115px; color: #a0a6ae; font-size: 13px; line-height: 20px; }
.adx { width: 7px; height: 7px; margin-right: 13px; stroke: #a0a6ae; }
.dark { color: #55595e; }
.ad i { width: 1px; height: 13px; margin: 0 6px 0 5px; background: #a0a6ae; }
.ad a { width: 59px; height: 19px; margin-left: 6px; border: 1px solid #a0a6ae; border-radius: 2px; display: flex; align-items: center; justify-content: center; font-size: 11px; }
.side { position: relative; flex: 1; }
.side h2, .side p { display: flex; padding-left: 14px; font-weight: 400; }
.side h2 { font-size: 15px; line-height: 34px; }
.side .first { margin-top: 3px; border-left: 4px solid #a0a6ae; padding-left: 10px; height: 34px; }
.name { margin-top: 13px; font-size: 13.5px; line-height: 20px; }
.src { align-items: center; margin-top: 2px; font-size: 11.5px; line-height: 20px; color: #70757c; }
.src i { width: 1px; height: 11px; margin: 0 10px 0 10px; background: #a0a6ae; }
.side .second { margin-top: 16px; margin-bottom: 9px; }
.links { gap: 13px; font-size: 13.5px; line-height: 27px; }
.tri { position: absolute; right: 3px; top: 5px; border: 3.5px solid transparent; border-top: 0; border-bottom: 4px solid #a0a6ae; }
.tools { height: 16px; margin-bottom: 6px; display: flex; align-items: center; padding-left: 429px; font-size: 13.5px; line-height: 20px; border-bottom: 1px solid #a0a6ae; flex: none; }
.tool, .zoomer { display: flex; align-items: center; margin-top: 3px; }
.tool svg { margin-left: 3px; margin-top: 2px; overflow: visible; }
.tool { color: #5c6066; }
.dim { color: #bfc3c8; }
.zoomer { margin-left: 26px; }
.zoomer svg { stroke: #a0a6ae; margin-right: 10px; margin-top: 3px; }
.zoomer svg:last-child { margin: 3px 0 0 11px; }
.share { display: flex; align-items: center; margin-left: 564px; margin-top: -12px; font-size: 11.5px; }
.share i { width: 9px; height: 9px; border-radius: 50%; background: #d04423; margin-right: 8px; }
.share em { font-style: normal; color: #a0a6ae; margin: 0 13px 0 6px; }
.ime { position: absolute; left: 1808px; top: 924px; width: 105px; height: 21px; background: #2d2d30; border-radius: 3px; color: #a0a6ae; display: flex; align-items: center; padding-left: 5px; font: 16px/20px "Noto Sans CJK SC", sans-serif; }
.zh { font-size: 22px; width: 24px; margin-right: 7px; margin-top: -1px; }
.punct { width: 13px; margin-right: 5px; letter-spacing: 2px; }
.half { width: 17px; margin-right: 6px; margin-top: -2px; }
.ime svg { width: 20px; height: 18px; }

.taskbar { height: 38px; flex: none; background: #2d2d30; display: flex; align-items: center; padding-left: 10.5px; color: #fefdfc; }
.system { display: flex; gap: 21px; width: 172px; flex: none; }
.apps { display: flex; flex: none; height: 38px; }
.task { width: 46.5px; display: flex; align-items: center; justify-content: center; }
.open { background: linear-gradient(#a0a6ae, #a0a6ae) center bottom / 38px 2px no-repeat; }
.active { background: repeating-conic-gradient(#d04423 0 25%, #a03d27 0 50%) center 1px / 2px 2px; border-top: 1px solid #2d2d30; border-bottom: 3px solid #d04423; border-left: 1px solid #2d2d30; border-right: 1px solid #2d2d30; }
.tray { display: flex; align-items: center; flex: none; margin-left: 101px; }
.zhong { font-size: 13px; line-height: 20px; margin-left: 6px; width: 14px; }
.sogou { margin-left: 13px; }
.clock { width: 60px; margin: 0 15px 0 13px; display: flex; flex-direction: column; align-items: center; font-size: 11.5px; line-height: 17px; }
.corner { position: absolute; width: 18px; height: 20px; border: 0 solid #d04423; }
.tl { left: 0; top: 2px; border-width: 4px 0 0 2px; }
.tr { right: 0; top: 2px; border-width: 4px 2px 0 0; }
.bl { left: 0; top: 1018px; border-width: 0 0 3px 2px; }
.br { right: 0; top: 1018px; width: 5px; border-width: 0 2px 3px 0; }
</style>
